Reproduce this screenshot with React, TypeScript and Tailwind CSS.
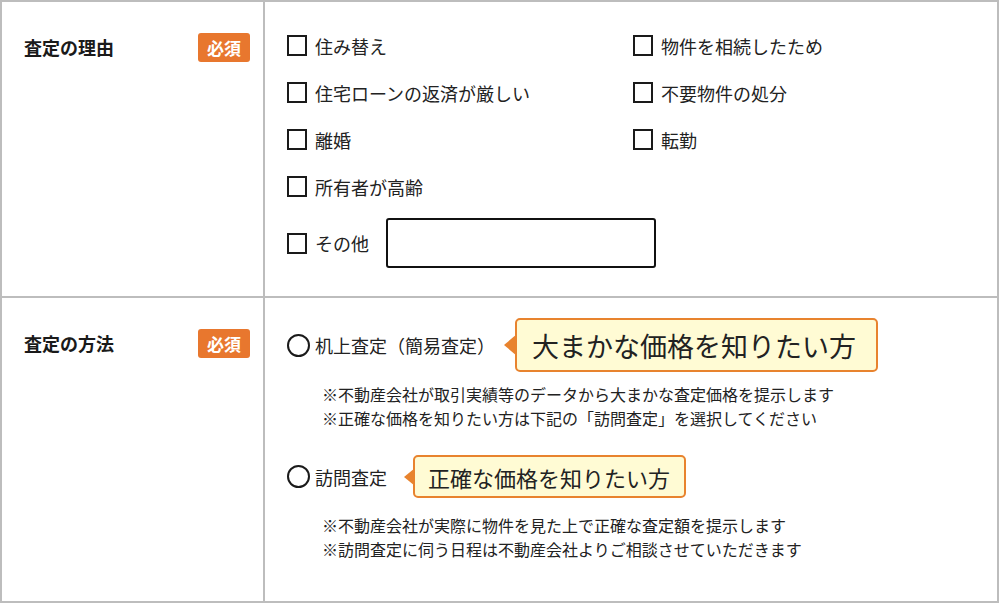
const font = { fontFamily: '"Noto Sans CJK JP", "Noto Sans", sans-serif' };

const leftReasons = ["住み替え", "住宅ローンの返済が厳しい", "離婚", "所有者が高齢"];
const rightReasons = ["物件を相続したため", "不要物件の処分", "転勤"];

function Checkbox({ label }: { label: string }) {
  return (
    <label className="flex h-[47px] items-center">
      <span className="h-[21px] w-[20px] shrink-0 border-2 border-[#1a1a1a] bg-white" />
      <span className="ml-[8px] text-[18px] leading-none text-[#222]">{label}</span>
    </label>
  );
}

function Badge() {
  return (
    <span className="flex h-[29px] w-[52px] items-center justify-center rounded-[3px] bg-[#e8772e] text-[17px] font-bold text-white">
      必須
    </span>
  );
}

function Label({ text }: { text: string }) {
  return (
    <div className="border-r-2 border-[#bdbdbd] pl-[22px] pr-[13px] pt-[31px]">
      <div className="flex items-center justify-between">
        <span className="text-[18px] font-bold text-[#1a1a1a]">{text}</span>
        <Badge />
      </div>
    </div>
  );
}

function Callout({ text, big }: { text: string; big?: boolean }) {
  return (
    <div
      className={
        big
          ? "relative ml-[20px] flex h-[54px] items-center rounded-[5px] border-2 border-[#e8832e] bg-[#fffbd4] pl-[15px] pr-[20px] text-[27px] leading-none text-[#222]"
          : "relative ml-[26px] flex h-[43px] items-center rounded-[5px] border-2 border-[#e8832e] bg-[#fffbd4] pl-[13px] pr-[14px] text-[22px] leading-none text-[#222]"
      }
    >
      <span
        className={
          big
            ? "absolute right-full top-1/2 h-0 w-0 -translate-y-1/2 border-y-[11px] border-r-[13px] border-y-transparent border-r-[#e8832e]"
            : "absolute right-full top-1/2 h-0 w-0 -translate-y-1/2 border-y-[9px] border-r-[11px] border-y-transparent border-r-[#e8832e]"
        }
      />
      {text}
    </div>
  );
}

function Radio({ label }: { label: string }) {
  return (
    <>
      <span className="h-[23px] w-[23px] shrink-0 rounded-full border-2 border-[#1a1a1a] bg-white" />
      <span className="ml-[5px] text-[18px] leading-none text-[#222]">{label}</span>
    </>
  );
}

export default function App() {
  return (
    <div className="h-[605px] w-[1000px] bg-white" style={font}>
      <div className="grid w-[999px] grid-cols-[263px_1fr] border-2 border-[#bdbdbd]">
        <Label text="査定の理由" />
        <div className="h-[294px] pl-[22px] pt-[20px]">
          <div className="grid grid-cols-[346px_1fr]">
            <div>
              {leftReasons.map((r) => (
                <Checkbox key={r} label={r} />
              ))}
            </div>
            <div>
              {rightReasons.map((r) => (
                <Checkbox key={r} label={r} />
              ))}
            </div>
          </div>
          <div className="mt-[8px] flex items-center">
            <span className="h-[21px] w-[20px] shrink-0 border-2 border-[#1a1a1a] bg-white" />
            <span className="ml-[8px] text-[18px] leading-none text-[#222]">その他</span>
            <input className="ml-[17px] h-[50px] w-[270px] rounded-[3px] border-2 border-[#111] bg-white outline-none" />
          </div>
        </div>

        <div className="col-span-2 h-[2px] bg-[#bdbdbd]" />

        <Label text="査定の方法" />
        <div className="h-[303px] pl-[22px] pt-[20px]">
          <div className="flex h-[54px] items-center">
            <Radio label="机上査定（簡易査定）" />
            <Callout text="大まかな価格を知りたい方" big />
          </div>
          <div className="mt-[10px] pl-[35px] text-[16px] leading-[24px] text-[#222]">
            <p>※不動産会社が取引実績等のデータから大まかな査定価格を提示します</p>
            <p>※正確な価格を知りたい方は下記の「訪問査定」を選択してください</p>
          </div>
          <div className="mt-[25px] flex h-[43px] items-center">
            <Radio label="訪問査定" />
            <Callout text="正確な価格を知りたい方" />
          </div>
          <div className="mt-[15px] pl-[35px] text-[16px] leading-[24px] text-[#222]">
            <p>※不動産会社が実際に物件を見た上で正確な査定額を提示します</p>
            <p>※訪問査定に伺う日程は不動産会社よりご相談させていただきます</p>
          </div>
        </div>
      </div>
    </div>
  );
}
